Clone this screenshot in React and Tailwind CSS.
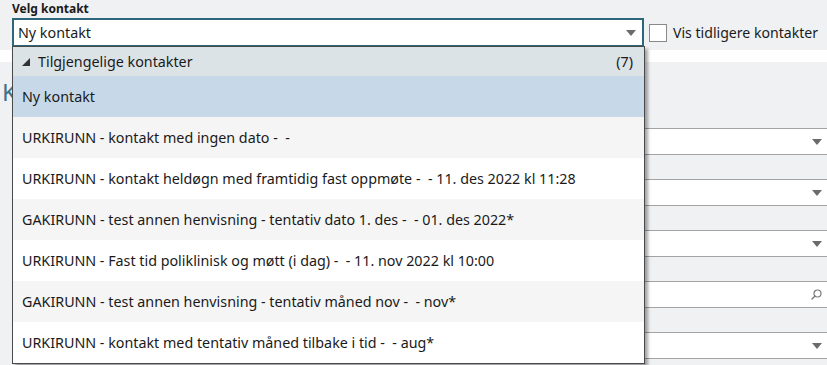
import React from "react";

const rows = [
  "URKIRUNN - kontakt med ingen dato -  -",
  "URKIRUNN - kontakt heldøgn med framtidig fast oppmøte -  - 11. des 2022 kl 11:28",
  "GAKIRUNN - test annen henvisning - tentativ dato 1. des -  - 01. des 2022*",
  "URKIRUNN - Fast tid poliklinisk og møtt (i dag) -  - 11. nov 2022 kl 10:00",
  "GAKIRUNN - test annen henvisning - tentativ måned nov -  - nov*",
  "URKIRUNN - kontakt med tentativ måned tilbake i tid -  - aug*",
];

const fields = ["select", "select", "select", "search", "select"];

function Arrow() {
  return (
    <svg width="10" height="6" viewBox="0 0 10 6" className="shrink-0">
      <path d="M0 0 H10 L5 6 Z" fill="#6b6b6b" />
    </svg>
  );
}

function SearchIcon() {
  return (
    <svg width="11" height="11" viewBox="0 0 11 11" className="shrink-0">
      <circle cx="6.5" cy="4.5" r="3.5" fill="none" stroke="#7a7a7a" strokeWidth="1.2" />
      <path d="M4 7 L1 10" stroke="#7a7a7a" strokeWidth="1.4" strokeLinecap="round" />
    </svg>
  );
}

export default function App() {
  return (
    <div
      className="relative w-[827px] h-[365px] overflow-hidden bg-[#f0f1f3] text-[#1a1a1a]"
      style={{ fontFamily: '"Noto Sans", "Open Sans", Arial, sans-serif' }}
    >
      {/* Top: contact picker */}
      <div className="h-[50px] px-3 pt-[1px]">
        <div className="text-[12px] font-bold leading-[16px] h-[17px]">Velg kontakt</div>
        <div className="flex items-center h-[29px]">
          <div className="w-[632px] h-[29px] shrink-0 flex items-center justify-between bg-white border-2 border-[#2e667c] pl-[4px] pr-[6px]">
            <span className="text-[14.3px]">Ny kontakt</span>
            <Arrow />
          </div>
          <div className="ml-[5px] w-[18px] h-[18px] shrink-0 bg-white border border-[#8a8a8a]" />
          <span className="ml-[6px] text-[14.1px] whitespace-nowrap">Vis tidligere kontakter</span>
        </div>
      </div>
      <div className="h-[12px] bg-white" />

      {/* Form behind the popup */}
      <div className="pl-[2px] pt-[14px]">
        <div className="text-[24px] leading-[32px] text-[#3f7389]">Kontakt</div>
      </div>
      <div className="flex flex-col gap-[24px] pt-[20px] pl-3">
        {fields.map((f, i) => (
          <div
            key={i}
            className="h-[27px] bg-white border-y border-[#a3a3a3] flex items-center justify-end pr-[5px]"
          >
            {f === "search" ? <SearchIcon /> : <Arrow />}
          </div>
        ))}
      </div>

      {/* Dropdown popup */}
      <div className="absolute left-[12px] top-[46px] w-[633px] border border-[#4a4a4a] bg-white shadow-[3px_3px_3px_rgba(0,0,0,0.35)]">
        <div className="h-[29px] bg-[#dce3e7] flex items-center justify-between pl-[9px] pr-[11px] text-[14.3px]">
          <div className="flex items-center">
            <svg width="8" height="8" viewBox="0 0 8 8" className="mr-[8px] shrink-0">
              <path d="M8 0 V8 H0 Z" fill="#333" />
            </svg>
            <span>Tilgjengelige kontakter</span>
          </div>
          <span>(7)</span>
        </div>
        <div className="h-[41px] bg-[#c7d9e8] flex items-center pl-[9px] text-[14.3px]">Ny kontakt</div>
        {rows.map((r, i) => (
          <div
            key={i}
            className={`h-[41px] flex items-center pl-[9px] text-[14.3px] whitespace-pre ${
              i % 2 === 0 ? "bg-[#f5f5f5]" : "bg-white"
            }`}
          >
            {r}
          </div>
        ))}
      </div>
    </div>
  );
}
